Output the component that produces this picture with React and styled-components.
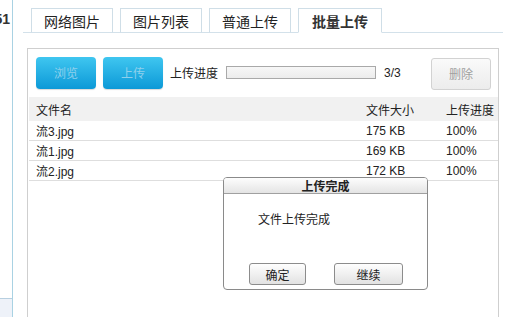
import React from "react";
import styled, { createGlobalStyle } from "styled-components";

const GlobalStyle = createGlobalStyle`
    html, body {
        margin: 0;
        padding: 0;
        background: #fff;
    }
    body {
        font-family: "Liberation Sans", "Noto Sans CJK SC", sans-serif;
        font-size: 12px;
        color: #222;
        overflow: hidden;
    }
`;

const Page = styled.div`
    position: relative;
    width: 512px;
    height: 317px;
    display: flex;
    overflow: hidden;
`;

const Sidebar = styled.div`
    width: 12px;
    flex: none;
    border-right: 1px solid #a9d2e3;
    display: flex;
    flex-direction: column;
    justify-content: space-between;
`;

const SideLabel = styled.div`
    margin-top: 11px;
    height: 16px;
    display: flex;
    justify-content: flex-end;
    overflow: hidden;
    padding-right: 2px;
    font-size: 14px;
    font-weight: bold;
    color: #333;
    white-space: nowrap;
`;

const SideFoot = styled.div`
    height: 18px;
    background: #eef2f9;
    border-top: 1px solid #b7cfe0;
`;

const Main = styled.div`
    flex: 1;
    display: flex;
    flex-direction: column;
`;

const TabBar = styled.div`
    margin: 8px 9px 0 10px;
    padding-left: 8px;
    display: flex;
    gap: 7px;
    border-bottom: 1px solid #d3e1ea;
`;

const Tab = styled.div`
    width: ${p => (p.$active ? 82 : 80)}px;
    height: 23px;
    margin-bottom: -1px;
    display: flex;
    align-items: center;
    justify-content: center;
    border: 1px solid #cfdee7;
    border-bottom: 1px solid ${p => (p.$active ? "#fff" : "#d3e1ea")};
    background: #fff;
    font-family: "Noto Sans CJK SC", sans-serif;
    font-size: 14px;
    font-weight: ${p => (p.$active ? "bold" : "normal")};
    color: ${p => (p.$active ? "#333" : "#222")};
`;

const Panel = styled.div`
    margin: 15px 13px 0 14px;
    flex: 1;
    border: 1px solid #cfcfcf;
    border-bottom: none;
    padding: 7px 0 0 1px;
`;

const Toolbar = styled.div`
    display: flex;
    align-items: center;
    padding: 0 7px 0 7px;
    height: 33px;
`;

const BlueButton = styled.div`
    width: 60px;
    height: 32px;
    margin-right: 7px;
    border-radius: 4px;
    background: linear-gradient(#3fc6f0, #0c99d7);
    box-shadow: 0 1px 1px rgba(0, 0, 0, 0.15);
    display: flex;
    align-items: center;
    justify-content: center;
    color: #8fd0ec;
    font-family: "Noto Sans CJK SC", sans-serif;
    font-size: 12px;
`;

const Label = styled.span`
    font-family: "Noto Sans CJK SC", sans-serif;
    margin-right: 8px;
`;

const Progress = styled.div`
    width: 148px;
    height: 11px;
    border: 1px solid #a9a9a9;
    background: linear-gradient(#f7f7f7, #ececec);
`;

const Count = styled.span`
    margin-left: 8px;
    width: 30px;
`;

const GreyButton = styled.div`
    margin-left: auto;
    margin-top: 2px;
    width: 58px;
    height: 30px;
    border: 1px solid #d2d2d2;
    border-radius: 3px;
    background: linear-gradient(#fafafa, #ececec);
    display: flex;
    align-items: center;
    justify-content: center;
    color: #a0a0a0;
    font-family: "Noto Sans CJK SC", sans-serif;
`;

const Table = styled.div`
    margin-top: 8px;
`;

const Row = styled.div`
    display: grid;
    grid-template-columns: 330px 80px 1fr;
    align-items: center;
    height: ${p => (p.$head ? 24 : 19)}px;
    padding-left: 7px;
    background: ${p => (p.$head ? "#f1f1f1" : "#fff")};
    border-bottom: ${p => (p.$head ? "none" : "1px solid #dedede")};
    font-family: "Liberation Sans", "Noto Sans CJK SC", sans-serif;
`;

const Dialog = styled.div`
    position: absolute;
    left: 223px;
    top: 177px;
    width: 203px;
    height: 111px;
    border: 1px solid #8a8a8a;
    border-radius: 4px;
    background: #fff;
    display: flex;
    flex-direction: column;
    overflow: hidden;
`;

const DialogTitle = styled.div`
    height: 15px;
    border-bottom: 1px solid #a0a0a0;
    background: linear-gradient(#fdfdfd, #e4e4e4);
    display: flex;
    align-items: center;
    justify-content: center;
    font-family: "Noto Sans CJK SC", sans-serif;
    font-weight: bold;
    font-size: 12px;
`;

const DialogText = styled.div`
    flex: 1;
    padding: 16px 0 0 34px;
    font-family: "Noto Sans CJK SC", sans-serif;
`;

const DialogButtons = styled.div`
    display: flex;
    gap: 28px;
    padding: 0 0 4px 25px;
`;

const DialogButton = styled.div`
    width: ${p => p.$w}px;
    height: 20px;
    border: 1px solid #8c8c8c;
    border-radius: 3px;
    background: linear-gradient(#fefefe, #e2e2e2);
    display: flex;
    align-items: center;
    justify-content: center;
    font-family: "Noto Sans CJK SC", sans-serif;
`;

const files = [
    { name: "流3.jpg", size: "175 KB", progress: "100%" },
    { name: "流1.jpg", size: "169 KB", progress: "100%" },
    { name: "流2.jpg", size: "172 KB", progress: "100%" },
];

const tabs = ["网络图片", "图片列表", "普通上传", "批量上传"];

const App = () => {
    return (
        <Page>
            <GlobalStyle />
            <Sidebar>
                <SideLabel>151</SideLabel>
                <SideFoot />
            </Sidebar>
            <Main>
                <TabBar>
                    {tabs.map((t, i) => (
                        <Tab key={t} $active={i === tabs.length - 1}>{t}</Tab>
                    ))}
                </TabBar>
                <Panel>
                    <Toolbar>
                        <BlueButton>浏览</BlueButton>
                        <BlueButton>上传</BlueButton>
                        <Label>上传进度</Label>
                        <Progress />
                        <Count>3/3</Count>
                        <GreyButton>删除</GreyButton>
                    </Toolbar>
                    <Table>
                        <Row $head>
                            <span>文件名</span>
                            <span>文件大小</span>
                            <span>上传进度</span>
                        </Row>
                        {files.map(f => (
                            <Row key={f.name}>
                                <span>{f.name}</span>
                                <span>{f.size}</span>
                                <span>{f.progress}</span>
                            </Row>
                        ))}
                    </Table>
                </Panel>
            </Main>
            <Dialog>
                <DialogTitle>上传完成</DialogTitle>
                <DialogText>文件上传完成</DialogText>
                <DialogButtons>
                    <DialogButton $w={55}>确定</DialogButton>
                    <DialogButton $w={67}>继续</DialogButton>
                </DialogButtons>
            </Dialog>
        </Page>
    );
};

export default App;
